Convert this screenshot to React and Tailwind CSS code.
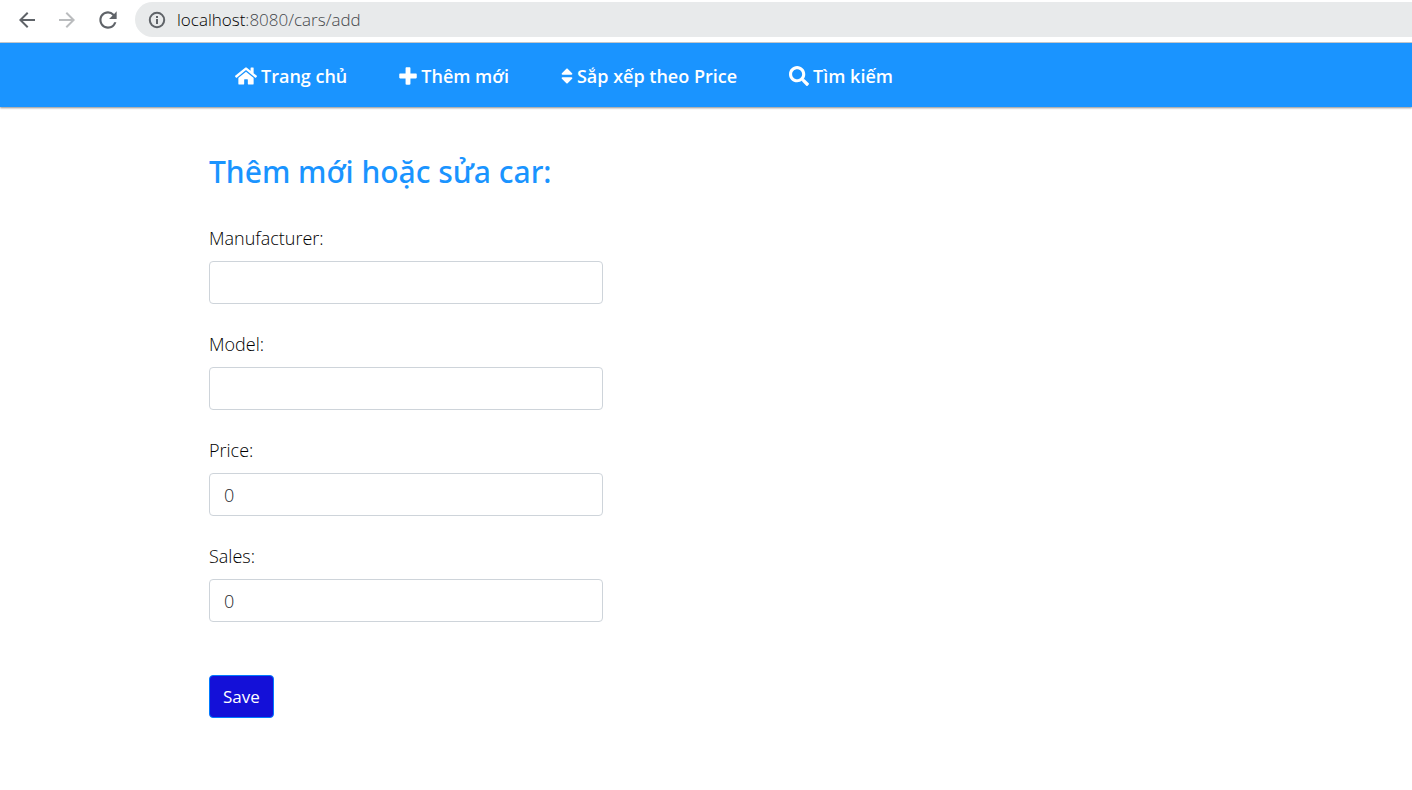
import { FaSort, FaSearch } from "react-icons/fa";
import { MdArrowBack, MdArrowForward, MdRefresh } from "react-icons/md";

function HomeIcon({ className }) {
  return (
    <svg viewBox="0 0 576 512" fill="currentColor" aria-hidden="true" className={className}>
      <path d="M488 312.7V456c0 13.3-10.7 24-24 24H348c-6.6 0-12-5.4-12-12V356c0-6.6-5.4-12-12-12h-72c-6.6 0-12 5.4-12 12v112c0 6.6-5.4 12-12 12H112c-13.3 0-24-10.7-24-24V312.7c0-3.6 1.6-7 4.4-9.3l188-154.8c4.4-3.6 10.8-3.6 15.3 0l188 154.8c2.7 2.3 4.3 5.7 4.3 9.3zm83.6-60.9L488 182.9V44.4c0-6.6-5.4-12-12-12h-56c-6.6 0-12 5.4-12 12V117l-89.5-73.7c-17.7-14.6-43.3-14.6-61 0L4.4 251.8c-5.1 4.2-5.8 11.8-1.6 16.9l25.5 31c4.2 5.1 11.8 5.8 16.9 1.6l235.2-193.7c4.4-3.6 10.8-3.6 15.3 0l235.2 193.7c5.1 4.2 12.7 3.5 16.9-1.6l25.5-31c4.2-5.2 3.4-12.7-1.7-16.9z" />
    </svg>
  );
}

function PlusIcon({ className }) {
  return (
    <svg viewBox="0 0 448 512" fill="currentColor" aria-hidden="true" className={className}>
      <path d="M448 294.2v-76.4c0-13.3-10.7-24-24-24H286.2V56c0-13.3-10.7-24-24-24h-76.4c-13.3 0-24 10.7-24 24v137.8H24c-13.3 0-24 10.7-24 24v76.4c0 13.3 10.7 24 24 24h137.8V456c0 13.3 10.7 24 24 24h76.4c13.3 0 24-10.7 24-24V318.2H424c13.3 0 24-10.7 24-24z" />
    </svg>
  );
}

function InfoIcon({ className }) {
  return (
    <svg viewBox="0 0 20 20" fill="none" stroke="currentColor" strokeWidth="2" aria-hidden="true" className={className}>
      <circle cx="10" cy="10" r="7.2" />
      <path d="M10 9v5M10 6v2" />
    </svg>
  );
}

const links = [
  { label: "Trang chủ", Icon: HomeIcon, size: "h-5 w-[22px]" },
  { label: "Thêm mới", Icon: PlusIcon, size: "h-5 w-[18px]" },
  { label: "Sắp xếp theo Price", Icon: FaSort, size: "h-5 w-3" },
  { label: "Tìm kiếm", Icon: FaSearch, size: "h-5 w-5" },
];

const fields = [
  { id: "manufacturer", label: "Manufacturer:", value: "" },
  { id: "model", label: "Model:", value: "" },
  { id: "price", label: "Price:", value: "0" },
  { id: "sales", label: "Sales:", value: "0" },
];

function BrowserBar() {
  return (
    <div className="flex h-[43px] items-start border-b border-[#c9cdd1] bg-white pt-0.5 pl-[15px]">
      <div className="flex h-[35px] items-center gap-4 text-[#5f6368]">
        <button type="button" aria-label="Back" className="size-6">
          <MdArrowBack className="size-6" />
        </button>
        <button type="button" aria-label="Forward" className="size-6 text-[#babcbe]">
          <MdArrowForward className="size-6" />
        </button>
        <button type="button" aria-label="Reload" className="size-[26px]">
          <MdRefresh className="size-[26px]" />
        </button>
      </div>
      <div className="ml-3.5 flex h-[35px] flex-1 items-center gap-2.5 rounded-l-full bg-[#e8eaeb] pl-3">
        <InfoIcon className="size-5 text-[#5f6368]" />
        <span className="text-[17px] font-light text-[#45484b]">
          <span className="text-black">localhost</span>:8080/cars/add
        </span>
      </div>
    </div>
  );
}

function NavBar() {
  return (
    <nav className="flex h-16 items-center gap-[52px] bg-[#1a94ff] pt-0.5 pl-[235px] shadow-[0_1px_2px_rgba(0,0,0,0.45)]">
      {links.map(({ label, Icon, size }) => (
        <a key={label} href="#" className="flex items-center gap-1 text-lg font-semibold whitespace-nowrap text-white">
          <Icon className={size} />
          {label}
        </a>
      ))}
    </nav>
  );
}

export default function App() {
  return (
    <div className="min-h-screen bg-white font-['Open_Sans','Noto_Sans',sans-serif]">
      <BrowserBar />
      <NavBar />
      <main className="pt-[45px] pl-[209px]">
        <h1 className="font-['Noto_Sans',sans-serif] text-[30px] leading-10 font-medium text-[#1a94ff]">
          Thêm mới hoặc sửa car:
        </h1>
        <form className="mt-[33px] w-[394px]" onSubmit={(e) => e.preventDefault()}>
          {fields.map(({ id, label, value }) => (
            <div key={id} className="mb-[27px]">
              <label htmlFor={id} className="mb-[9px] block text-lg leading-[27px] font-light text-black">
                {label}
              </label>
              <input
                id={id}
                type="text"
                defaultValue={value}
                className="block h-[43px] w-full rounded border border-[#ced4da] bg-white px-3.5 text-lg font-light text-[#25292d]"
              />
            </div>
          ))}
          <button
            type="submit"
            className="mt-[26px] h-[43px] rounded border border-[#007bff] bg-[#1410d8] px-[13px] text-[17px] text-white"
          >
            Save
          </button>
        </form>
      </main>
    </div>
  );
}
